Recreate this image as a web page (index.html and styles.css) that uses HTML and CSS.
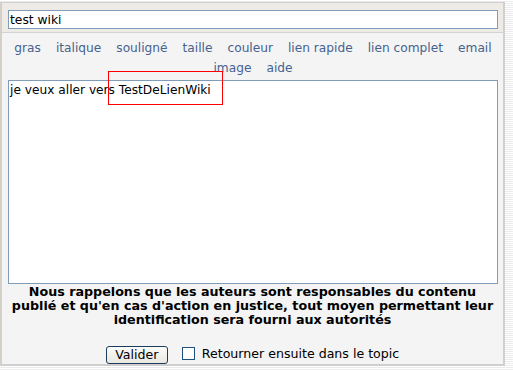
FILE: index.html
```html
<!DOCTYPE html>
<html lang="fr">
<head>
    <meta charset="UTF-8">
    <title>Wiki</title>
    <link rel="stylesheet" href="styles.css">
</head>
<body>
    <div class="panel">
        <div class="header">
            <input class="title-input" type="text" value="test wiki">
        </div>
        <div class="toolbar">
            <a href="#">gras</a>
            <a href="#">italique</a>
            <a href="#">souligné</a>
            <a href="#">taille</a>
            <a href="#">couleur</a>
            <a href="#">lien rapide</a>
            <a href="#">lien complet</a>
            <a href="#">email</a>
            <a href="#">image</a>
            <a href="#">aide</a>
        </div>
        <div class="editor">
            <textarea class="content">je veux aller vers TestDeLienWiki</textarea>
        </div>
        <p class="notice">Nous rappelons que les auteurs sont responsables du contenu publié et qu'en cas d'action en justice, tout moyen permettant leur identification sera fourni aux autorités</p>
        <div class="actions">
            <button class="submit">Valider</button>
            <label class="back"><input type="checkbox"> Retourner ensuite dans le topic</label>
        </div>
        <div class="highlight"></div>
    </div>
</body>
</html>
```

FILE: styles.css
```css
body {
    margin: 0;
    font-family: "DejaVu Sans", sans-serif;
    font-size: 12px;
    background: repeating-linear-gradient(to bottom, #ffffff 0, #ffffff 1px, #ebebeb 1px, #ebebeb 2px);
    height: 370px;
}

.panel {
    position: relative;
    margin-top: 2px;
    width: 501px;
    border-top: 1px solid #cfcfcf;
    border-left: 2px solid #d4d0c8;
    border-right: 2px solid #d0d0d0;
    border-bottom: 2px solid #cfcfcf;
    background-color: #f4f4f4;
    height: 361px;
}

.header {
    background-color: #eeebe7;
    padding: 7px 0 0 6px;
    height: 22px;
    border-bottom: 1px solid #d2d2d2;
}

.title-input {
    box-sizing: border-box;
    width: 490px;
    height: 19px;
    margin: 0;
    padding: 0 1px;
    border: 1px solid #7f9db9;
    font-family: "DejaVu Sans", sans-serif;
    font-size: 12.3px;
    color: #000;
    background: #fff;
    outline: none;
}

.toolbar {
    display: flex;
    flex-wrap: wrap;
    justify-content: center;
    column-gap: 15px;
    width: 490px;
    margin: 5px 0 0 6px;
    line-height: 20px;
    font-size: 12.2px;
}

.toolbar a {
    color: #46628f;
    text-decoration: none;
}

.editor {
    padding: 2px 0 0 6px;
}

.content {
    display: block;
    box-sizing: border-box;
    width: 490px;
    height: 204px;
    margin: 0;
    padding: 2px 1px;
    border: 1px solid #7f9db9;
    font-family: "DejaVu Sans", sans-serif;
    font-size: 12.2px;
    line-height: 14px;
    resize: none;
    background: #fff;
    outline: none;
}

.notice {
    margin: 1px 6px 0 6px;
    text-align: center;
    font-weight: bold;
    font-size: 12.7px;
    line-height: 14px;
}

.actions {
    display: flex;
    justify-content: center;
    align-items: center;
    gap: 14px;
    margin-top: 19px;
    font-size: 12.6px;
}

.submit {
    font-family: "DejaVu Sans", sans-serif;
    font-size: 12.6px;
    width: 62px;
    height: 18px;
    padding: 0;
    border: 1px solid #1c3c5c;
    border-radius: 3px;
    background: linear-gradient(#fbfbf9, #e9e7e1);
    color: #000;
    line-height: 14px;
}

.back {
    display: flex;
    align-items: center;
    gap: 7px;
    margin-top: -3px;
}

.back input {
    appearance: none;
    width: 13px;
    height: 13px;
    margin: 0;
    border: 1px solid #1c5180;
    background: #fff;
}

.highlight {
    position: absolute;
    left: 106px;
    top: 68px;
    width: 113px;
    height: 32px;
    border: 1px solid #ff0000;
}
```
